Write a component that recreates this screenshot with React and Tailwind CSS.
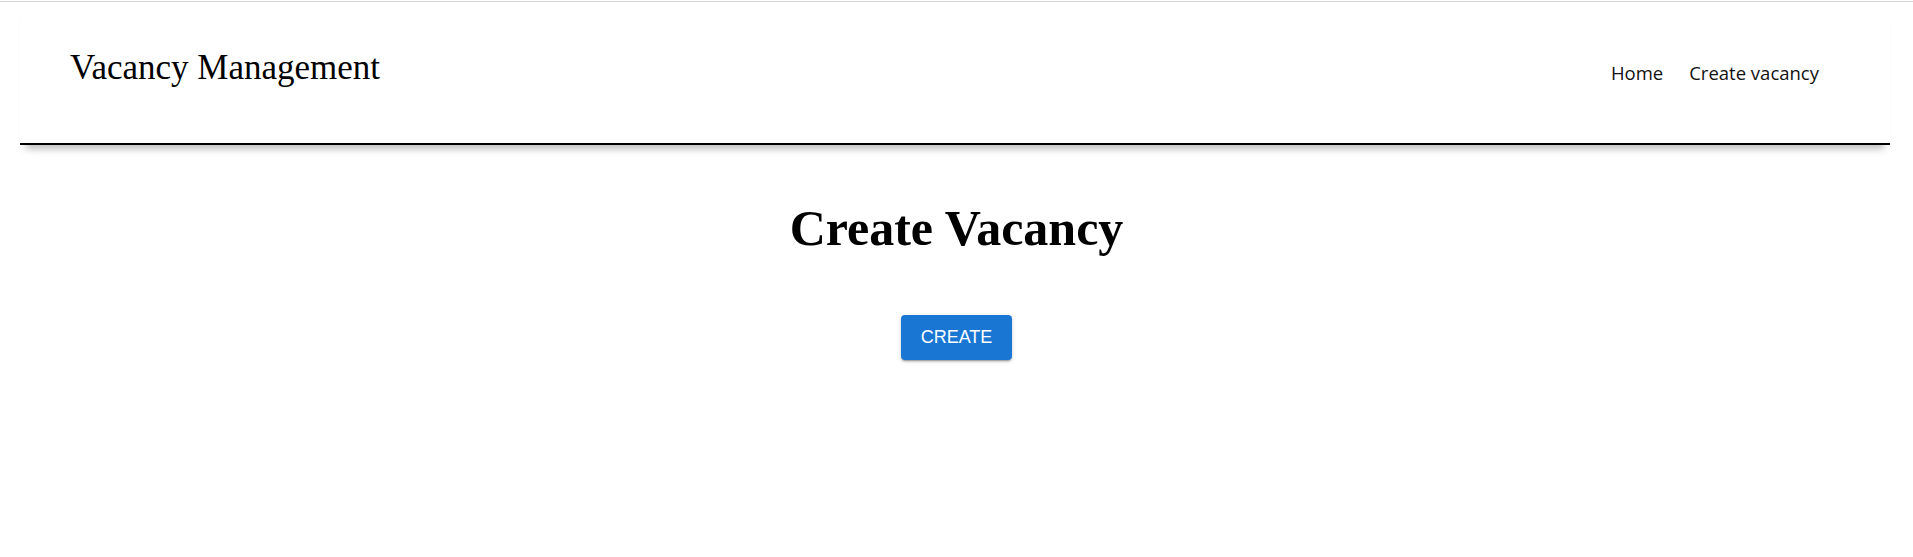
export default function App() {
    return (
        <div className="min-h-screen bg-white">
            {/* thin top rule */}
            <div className="pt-px">
                <div className="h-px bg-[#d4d4d4]" />
            </div>

            {/* Header */}
            <header className="ml-[20px] mr-[23px] flex items-start justify-between border-b-2 border-black pl-[50px] pr-[71px] pt-[46px] pb-[55px] shadow-[0_10px_7px_-6px_rgba(0,0,0,0.25)]">
                <h1 className="text-[35px] leading-[1.149] text-black" style={{ fontFamily: '"Liberation Serif", serif' }}>
                    Vacancy Management
                </h1>
                <nav className="mt-[11px] flex items-center gap-[26px] text-[18.5px] text-[#111]" style={{ fontFamily: '"Open Sans", sans-serif' }}>
                    <a href="#" className="text-inherit no-underline">Home</a>
                    <a href="#" className="text-inherit no-underline">Create vacancy</a>
                </nav>
            </header>

            {/* Main */}
            <main className="flex flex-col items-center">
                <h2 className="mt-[55px] text-[50px] font-bold leading-[1.149] text-black" style={{ fontFamily: '"Liberation Serif", serif' }}>
                    Create Vacancy
                </h2>
                <button
                    className="mt-[57px] rounded-[4px] bg-[#1976d2] px-[20px] py-[7px] text-[18px] leading-[31px] text-white uppercase shadow-[0_3px_1px_-2px_rgba(0,0,0,0.2),0_2px_2px_0_rgba(0,0,0,0.14),0_1px_5px_0_rgba(0,0,0,0.12)] cursor-pointer"
                    style={{ fontFamily: '"Liberation Sans", Arial, sans-serif' }}
                >
                    Create
                </button>
            </main>
        </div>
    );
}
